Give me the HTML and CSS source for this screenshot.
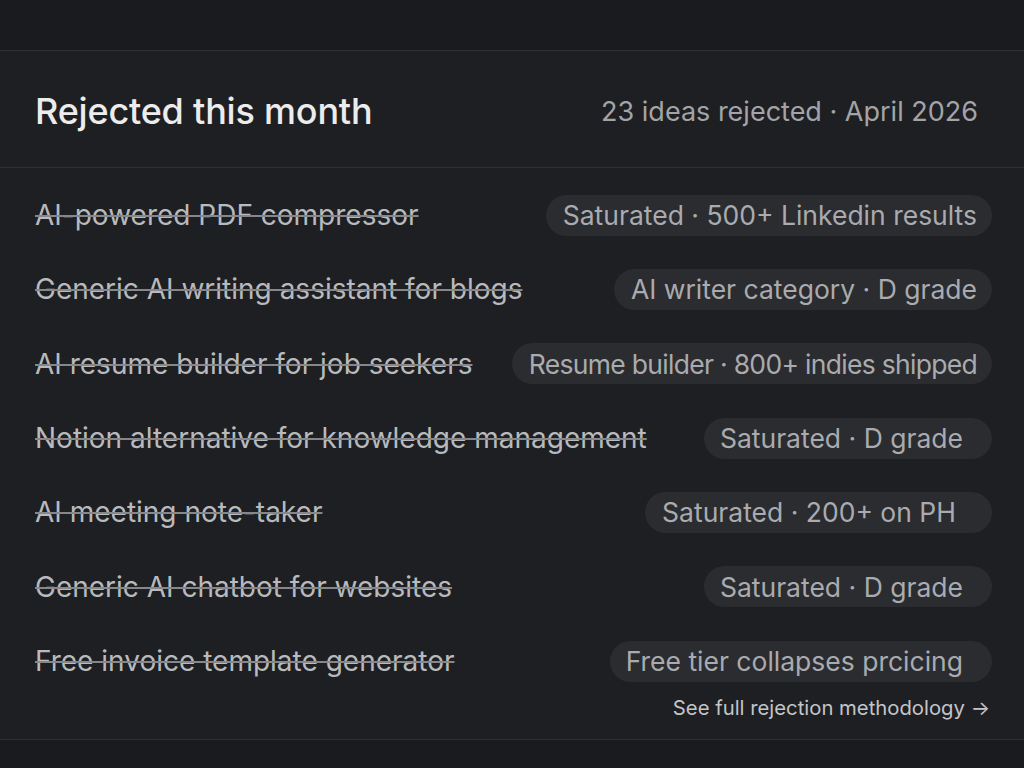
FILE: index.html
```html
<!DOCTYPE html>
<html lang="en">
<head>
<meta charset="utf-8">
<title>Rejected this month</title>
<link rel="stylesheet" href="styles.css">
</head>
<body>
<div class="topbar"></div>
<section class="panel">
  <header class="panel-head">
    <h2 class="title">Rejected this month</h2>
    <div class="meta">23 ideas rejected · April 2026</div>
  </header>
  <ul class="list">
    <li class="row"><span class="idea">AI-powered PDF compressor</span><span class="pill">Saturated · 500+ Linkedin results</span></li>
    <li class="row"><span class="idea">Generic AI writing assistant for blogs</span><span class="pill">AI writer category · D grade</span></li>
    <li class="row"><span class="idea">AI resume builder for job seekers</span><span class="pill tight">Resume builder · 800+ indies shipped</span></li>
    <li class="row"><span class="idea">Notion alternative for knowledge management</span><span class="pill pad-r">Saturated · D grade</span></li>
    <li class="row"><span class="idea">AI meeting note-taker</span><span class="pill pad-rr">Saturated · 200+ on PH</span></li>
    <li class="row"><span class="idea">Generic AI chatbot for websites</span><span class="pill pad-r">Saturated · D grade</span></li>
    <li class="row"><span class="idea">Free invoice template generator</span><span class="pill pad-r">Free tier collapses prcicing</span></li>
  </ul>
  <div class="foot"><a class="link" href="#">See full rejection methodology →</a></div>
</section>
<div class="bottombar"></div>
</body>
</html>
```
FILE: styles.css
```css
* { box-sizing: border-box; }
html, body { margin: 0; padding: 0; }
body {
  background: #1a1b1e;
  font-family: Inter, "Noto Sans", sans-serif;
  color: #b4b6b9;
  height: 768px;
  overflow: hidden;
}
.topbar { height: 50px; background: #1a1b1e; }
.panel {
  background: #1e1f22;
  border-top: 1px solid #2f3034;
  border-bottom: 1px solid #2f3034;
}
.panel-head {
  height: 117px;
  display: flex;
  align-items: center;
  justify-content: space-between;
  padding: 4px 46px 0 35px;
  border-bottom: 1px solid #2f3034;
}
.title {
  margin: 0;
  font-size: 36px;
  font-weight: 500;
  color: #ececed;
  letter-spacing: -0.2px;
}
.meta {
  font-size: 27px;
  color: #a2a4a8;
}
.list {
  list-style: none;
  margin: 0;
  padding: 10px 32px 0 35px;
}
.row {
  height: 74.33px;
  display: flex;
  align-items: center;
  justify-content: space-between;
}
.idea {
  font-size: 28px;
  color: #b8babd;
  text-decoration: line-through;
  text-decoration-color: #85878b;
  text-decoration-thickness: 1.5px;
}
.pill {
  height: 41px;
  display: inline-flex;
  align-items: center;
  padding: 0 15px 0 17px;
  border-radius: 21px;
  background: #2b2c30;
  font-size: 26.5px;
  color: #a9abaf;
  white-space: nowrap;
}
.pill.tight { letter-spacing: -0.7px; }
.pill.pad-r { padding-right: 29px; padding-left: 16px; }
.pill.pad-rr { padding-right: 36px; }
.foot {
  display: flex;
  justify-content: flex-end;
  margin-top: -2px;
  padding: 0 34px 19px 0;
}
.link {
  font-size: 20.3px;
  line-height: 24px;
  color: #c3c5c8;
  text-decoration: none;
}
.bottombar { height: 40px; }
```
